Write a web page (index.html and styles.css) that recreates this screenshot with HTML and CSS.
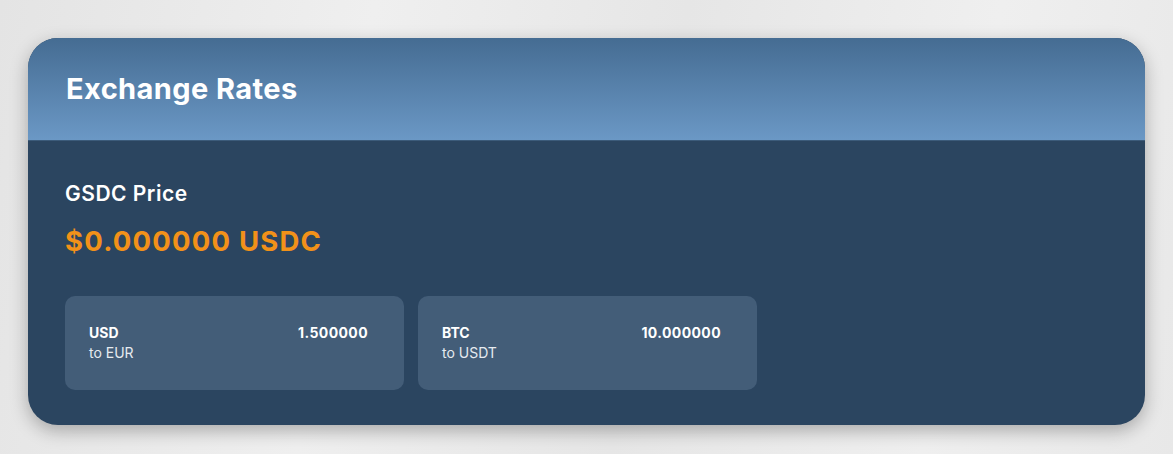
FILE: index.html
```html
<!DOCTYPE html>
<html>
<head>
<meta charset="utf-8">
<link rel="stylesheet" href="styles.css">
</head>
<body>
<div class="page">
  <div class="card">
    <div class="card-header">
      <h1 class="title">Exchange Rates</h1>
    </div>
    <div class="card-body">
      <div class="label">GSDC Price</div>
      <div class="price">$0.000000 USDC</div>
      <div class="rates">
        <div class="rate">
          <div class="rate-left">
            <div class="rate-cur">USD</div>
            <div class="rate-to">to EUR</div>
          </div>
          <div class="rate-val">1.500000</div>
        </div>
        <div class="rate">
          <div class="rate-left">
            <div class="rate-cur">BTC</div>
            <div class="rate-to">to USDT</div>
          </div>
          <div class="rate-val">10.000000</div>
        </div>
      </div>
    </div>
  </div>
</div>
</body>
</html>
```
FILE: styles.css
```css
html, body {
  margin: 0;
  padding: 0;
}
body {
  width: 1173px;
  height: 454px;
  overflow: hidden;
  background: linear-gradient(100deg, #e4e4e4 0%, #efefef 30%, #e6e6e6 55%, #efefef 80%, #e8e8e8 100%);
  font-family: "Inter", "DejaVu Sans", sans-serif;
}
.page {
  padding: 38px 28px 0 28px;
}
.card {
  width: 1117px;
  height: 387px;
  border-radius: 30px;
  overflow: hidden;
  background: #2b4560;
  box-shadow: 0 6px 18px rgba(0, 0, 0, 0.28);
  display: flex;
  flex-direction: column;
}
.card-header {
  height: 102px;
  background: linear-gradient(180deg, #456c92 0%, #6b98c5 100%);
  border-bottom: 1px solid #3c5b7a;
  display: flex;
  align-items: center;
  padding: 0 38px;
}
.title {
  margin: 0;
  color: #ffffff;
  font-size: 29px;
  font-weight: 700;
  letter-spacing: 0.4px;
  padding-bottom: 2px;
}
.card-body {
  padding: 39px 37px 35px 37px;
  display: flex;
  flex-direction: column;
}
.label {
  color: #ffffff;
  font-size: 21px;
  font-weight: 600;
  line-height: 28px;
  letter-spacing: 0.5px;
}
.price {
  color: #f29119;
  font-size: 27.5px;
  font-weight: 700;
  line-height: 34px;
  letter-spacing: 1.2px;
  margin-top: 16px;
}
.rates {
  display: flex;
  gap: 14px;
  margin-top: 38px;
}
.rate {
  width: 339px;
  height: 94px;
  box-sizing: border-box;
  background: #435d78;
  border-radius: 10px;
  padding: 28px 36px 0 24px;
  display: flex;
  justify-content: space-between;
  align-items: flex-start;
}
.rate-cur {
  color: #ffffff;
  font-size: 14px;
  font-weight: 700;
  line-height: 18px;
}
.rate-to {
  color: #e6ebf0;
  font-size: 14px;
  font-weight: 400;
  line-height: 20px;
  margin-top: 1px;
}
.rate-val {
  color: #ffffff;
  font-size: 14px;
  font-weight: 700;
  line-height: 18px;
  letter-spacing: 0.4px;
}
```
